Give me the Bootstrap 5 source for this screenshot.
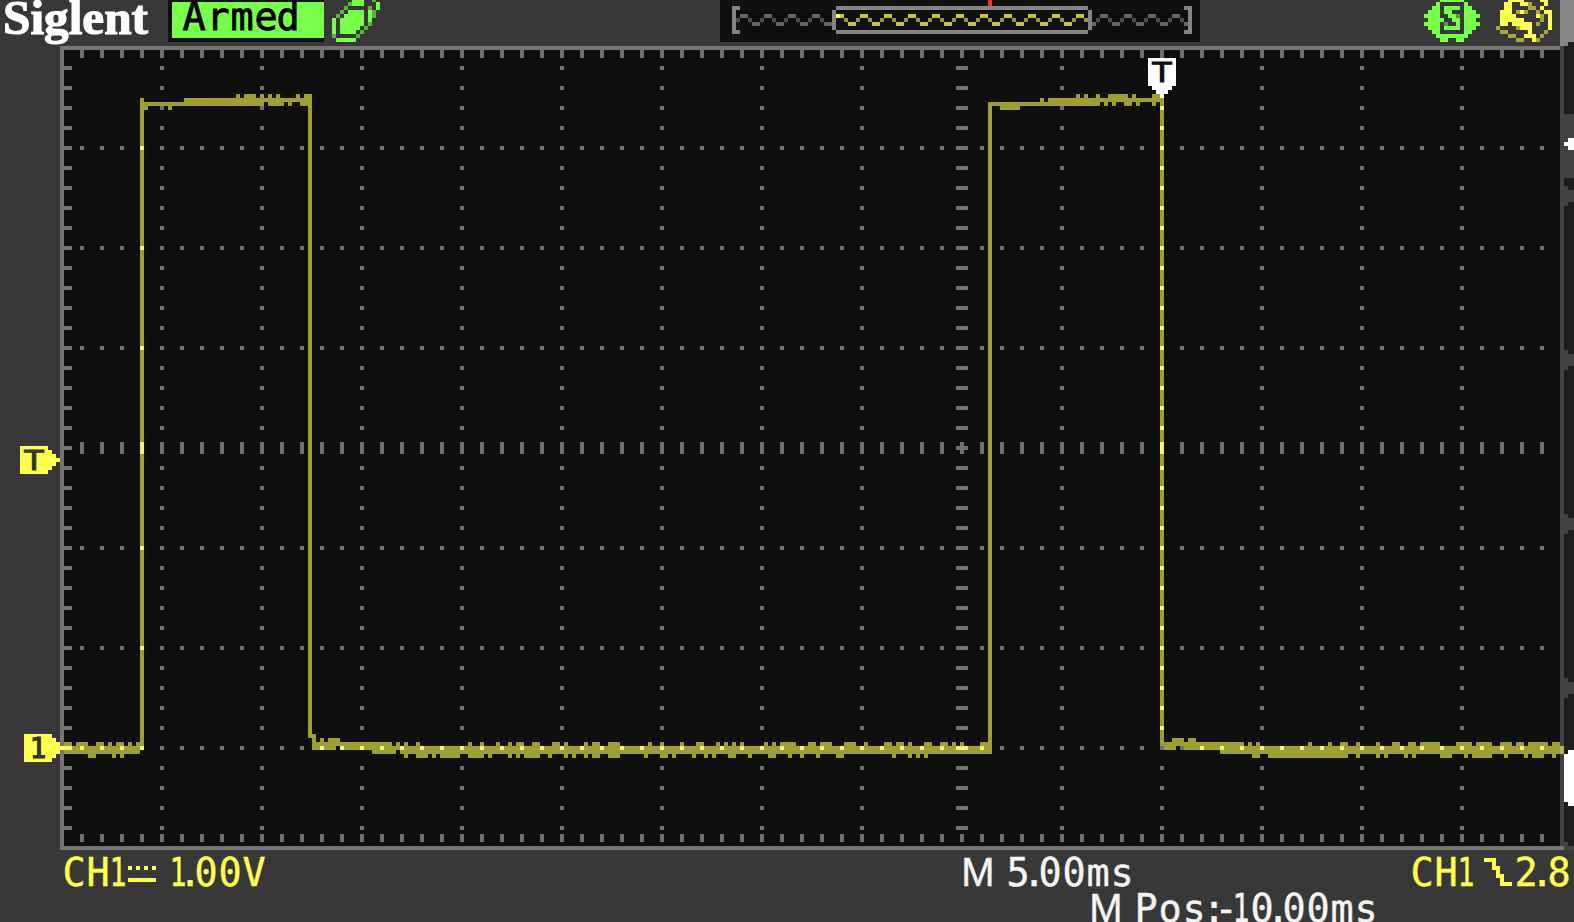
<!DOCTYPE html>
<html lang="en">
<head>
<meta charset="utf-8">
<title>Siglent oscilloscope</title>
<link href="https://cdn.jsdelivr.net/npm/bootstrap@5.3.0/dist/css/bootstrap.min.css" rel="stylesheet">
<style>
  body { background: #383838; width: 1574px; height: 922px; }
  svg { display: block; flex: none; overflow: visible; }
  .topbar { height: 46px; }
  .screen { height: 804px; }
  .readouts { height: 72px; }
  .px { shape-rendering: crispEdges; }
  .led { font-family: "DejaVu Sans Mono", monospace; font-size: 38.5px; text-anchor: middle; }
  .wide { font-family: "Liberation Sans", sans-serif; font-size: 40px; }
  .brand { font-family: "Liberation Serif", serif; font-weight: 700; font-size: 49px; fill: #fff; stroke: #fff; stroke-width: 1.2px; }
  .flag { font-family: "Liberation Sans", sans-serif; font-size: 29px; text-anchor: middle; }
  .yl { fill: #ffff50; }
  .wh { fill: #f4f4f4; }
  text.yl { stroke: #ffff50; stroke-width: .4px; }
  text.wh { stroke: #f4f4f4; stroke-width: .4px; }
  .gap-leaf { margin-left: 8px; }
  .gap-preview { margin-left: 340px; }
  .gap-usb { margin-left: 224px; }
  .gap-disk { margin-left: 16px; }
  .gap-edge { margin-left: 8px; }
</style>
</head>
<body class="m-0 overflow-hidden d-flex flex-column">

<header class="topbar d-flex align-items-start">
  <svg width="168" height="46" viewBox="0 0 168 46"><text class="brand" x="3" y="34" textLength="145" lengthAdjust="spacingAndGlyphs">Siglent</text></svg>
  <svg width="156" height="46" viewBox="168 0 156 46">
    <g class="px"><rect x="168" y="0" width="156" height="42" fill="#0f0f0f"/><rect x="172" y="2" width="152" height="36" fill="#78ff4c"/></g>
    <text class="led" x="194 218 242 266 288" y="30" fill="#000" stroke="#000" stroke-width=".8">Armed</text>
  </svg>
  <svg id="leaf" class="px gap-leaf" width="48" height="46" viewBox="0 0 48 46"></svg>
  <!-- record overview -->
  <svg id="preview" class="px gap-preview" width="480" height="46" viewBox="720 0 480 46"></svg>
  <svg id="usb" class="px gap-usb" width="56" height="46" viewBox="0 0 56 46"></svg>
  <svg id="disk" class="px gap-disk" width="56" height="46" viewBox="0 0 56 46"></svg>
  <svg class="px gap-edge" width="14" height="46" viewBox="1560 0 14 46"><path fill="#858585" d="M1560 0h14v42h-6v4h-8z"/></svg>
</header>

<main class="screen d-flex">
  <svg width="60" height="804" viewBox="0 46 60 804" class="position-relative z-1">
    <path class="px yl" d="M20 446h28v4h4v4h4v4h4v4h-4v4h-4v4h-4v4h-28z"/>
    <text class="flag" x="34" y="470" textLength="21" lengthAdjust="spacingAndGlyphs" fill="#333" stroke="#333" stroke-width="1">T</text>
    <path class="px yl" d="M24 734h28v4h4v4h4v4h4v4h-4v4h-4v4h-4v4h-28z"/>
    <text x="38" y="758" text-anchor="middle" font-family="DejaVu Sans Mono" font-size="27.5" fill="#333" stroke="#333" stroke-width="1.2">1</text>
  </svg>
  <svg id="plot" width="1514" height="804" viewBox="60 46 1514 804"></svg>
</main>

<footer class="readouts d-flex flex-column">
  <div class="d-flex">
    <svg width="900" height="40" viewBox="0 850 900 40">
      <text class="led yl" y="886"><tspan x="74 98">CH</tspan><tspan x="118" textLength="17" lengthAdjust="spacingAndGlyphs">1</tspan></text>
      <path class="px yl" d="M128 866h4v4h-4zM136 866h4v4h-4zM144 866h4v4h-4zM152 866h4v4h-4zM128 878h28v4h-28z"/>
      <text class="led yl" y="886"><tspan x="178" textLength="17" lengthAdjust="spacingAndGlyphs">1</tspan><tspan x="190 206 230 254">.00V</tspan></text>
    </svg>
    <svg width="300" height="40" viewBox="900 850 300 40">
      <text class="led wh" y="886"><tspan class="wide" x="978">M</tspan><tspan x="1018 1034 1050 1074 1098 1122">5.00ms</tspan></text>
    </svg>
    <svg width="374" height="40" viewBox="1200 850 374 40">
      <text class="led yl" y="886"><tspan x="1422 1446">CH</tspan><tspan x="1466" textLength="17" lengthAdjust="spacingAndGlyphs">1</tspan></text>
      <path class="px yl" d="M1484 858h12v8h4v8h4v8h8v4h-12v-8h-4v-8h-4v-8h-8z"/>
      <text class="led yl" x="1526 1542 1559" y="886">2.8</text>
    </svg>
  </div>
  <svg width="1574" height="32" viewBox="0 890 1574 32">
    <text class="led wh" y="922"><tspan class="wide" x="1106">M</tspan><tspan x="1146 1170 1194 1214 1226">Pos:-</tspan><tspan x="1241" textLength="17" lengthAdjust="spacingAndGlyphs">1</tspan><tspan x="1262 1278 1294 1318 1342 1366">0.00ms</tspan></text>
  </svg>
</footer>

<script src="https://cdn.jsdelivr.net/npm/bootstrap@5.3.0/dist/js/bootstrap.bundle.min.js"></script>
<script>
const C = 4; // one display cell
const rect = (x, y, w, h) => `M${x} ${y}h${w}v${h}h${-w}z`;
const path = (d, fill) => `<path class="px" fill="${fill}" d="${d}"/>`;

// icon bitmaps: X bright, o dim
function icon(id, rows, bright, dim) {
  let a = '', b = '';
  rows.forEach((r, j) => [...r].forEach((c, i) => {
    const y = Math.max(0, j * C - 2), h = j ? C : 2;
    if (c === 'X') a += rect(i * C, y, C, h);
    if (c === 'o') b += rect(i * C, y, C, h);
  }));
  document.getElementById(id).innerHTML = path(a, bright) + path(b, dim);
}
icon('leaf', [
  '.....XXX..o.',
  '....oXXX...X',
  '...o.....o.X',
  '..o.XXXX.Xo.',
  '.o.XXXXX.Xo.',
  'X.XXXXXX.X..',
  'X.XXXXXX.o..',
  'X.XXXXX.o...',
  'X.XXXX.o....',
  'o.....o.....',
  '.XXXXX......'], '#78ff4c', '#57b53c');
icon('usb', [
  '....XXXXXX....',
  '...X......X...',
  '..XX.XXXX.XX..',
  '.XXX.XX...XXX.',
  'XXXX..XXo.XXXX',
  '.XXXX..XX.XXX.',
  'XXXX.o..X.XXXX',
  '.XXX.XXXX.XXX.',
  '..XX......XX..',
  '...XXXXXXXX...',
  '....XX..XX....'], '#78ff4c', '#4f9a39');
icon('disk', [
  '...XXXX....XX.',
  '..XX..XXo...X.',
  '..XX....oo.X..',
  '.XXX.oXo..o.XX',
  '.XXXX.....Xo.X',
  '.XXXXXX....o.X',
  '.XX.XXXXX.o..X',
  'o....oXXX....X',
  '.oo.....X...o.',
  '...oo..XXX.o..',
  '.....oo..Xo...'], '#ffff50', '#aaa53c');

// overview strip
(() => {
  let hiG = '', loG = '', hiY = '', loY = '';
  for (let x = 736; x < 1188; x += C) {
    if (x === 832 || x === 1088) continue;
    const p = ((x - 740) / C + 6) % 6, y = [14, 14, 18, 22, 22, 18][p];
    const mid = y === 18, r = rect(x, y, C, C);
    if (x > 832 && x < 1088) mid ? loY += r : hiY += r;
    else mid ? loG += r : hiG += r;
  }
  document.getElementById('preview').innerHTML =
    path(rect(720, 0, 480, 42), '#0f0f0f') +
    path(loG, '#505050') + path(hiG, '#656565') + path(loY, '#999635') + path(hiY, '#c8c43c') +
    path(rect(836, 14, 4, 4), '#ffff50') +
    path('M732 6h8v4h-4v20h4v4h-8zM1184 6h8v28h-8v-4h4v-20h-4z' +
      rect(832, 10, 4, 20) + rect(1088, 10, 4, 20) + rect(836, 6, 252, 4) + rect(836, 30, 252, 4), '#858585') +
    path(rect(988, 0, 4, 6), '#f03020');
})();

// trace: row y -> [from, to, from, to, ...]
const trace = {
  94: [236,240,244,256,260,264,268,272,276,280,296,300,304,312,
       1076,1080,1084,1088,1096,1100,1108,1128,1132,1136,1152,1164],
  98: [140,144,184,312,1040,1044,1048,1164],
  102: [140,264,268,284,288,292,300,312,988,1100,1104,1108,1112,1116,1124,1132,1136,1140,1152,1156,1160,1164],
  106: [140,148,168,172,1000,1020],
  734: [308,316],
  738: [312,316,320,324,328,340,1172,1184,1188,1196],
  742: [64,72,76,88,96,104,108,112,116,124,128,132,136,144,312,392,396,400,404,408,416,420,468,472,480,484,
        496,500,508,512,516,524,532,540,552,560,564,568,584,588,592,600,608,620,648,652,660,664,680,684,696,704,
        716,720,724,728,732,736,740,744,764,768,772,776,780,796,808,816,820,832,844,856,864,868,884,892,896,904,
        908,912,924,932,940,948,952,956,960,964,980,992,1160,1244,1248,1252,1256,1260,1308,1312,1328,1332,
        1340,1348,1356,1360,1376,1380,1392,1400,1408,1416,1420,1440,1456,1472,1476,1492,1500,1512,1516,1524,1528,1548,1552,1560],
  746: [64,144,312,336,340,992,1164,1176,1184,1564],
  750: [64,140,372,396,400,992,1220,1564],
  754: [88,96,112,116,120,124,404,408,416,428,432,436,440,460,468,484,488,492,508,512,516,520,524,540,548,552,
        564,568,572,576,584,588,592,600,608,620,644,648,660,668,672,676,692,696,704,708,712,716,728,736,748,752,
        768,776,788,792,800,804,816,820,836,844,892,896,908,912,916,920,924,928,1252,1260,1268,1348,1356,1360,
        1376,1380,1384,1388,1404,1408,1412,1416,1440,1452,1464,1468,1472,1492,1504,1508,1524,1528,1532,1544,1552,1556]
};
(() => {
  const lit = new Set(), grid = new Set();
  for (const y in trace) for (let i = 0; i < trace[y].length; i += 2)
    for (let x = trace[y][i]; x < trace[y][i + 1]; x += C) lit.add(x + ',' + y);
  [[140, 98, 750], [308, 94, 738], [988, 102, 754], [1160, 94, 746]].forEach(([x, a, b]) => {
    for (let y = a; y < b; y += C) lit.add(x + ',' + y);
  });
  const g = (x, y) => grid.add(x + ',' + y);
  for (let x = 80; x <= 1540; x += 20) {
    g(x, 50); g(x, 54); g(x, 834); g(x, 838);
    for (let y = 146; y <= 746; y += 100) g(x, y);
    g(x, 442); g(x, 450);
  }
  for (let y = 66; y <= 826; y += 20) {
    g(64, y); g(68, y);
    for (let x = 160; x <= 1460; x += 100) g(x, y);
    g(956, y); g(964, y);
  }
  let t = '', d = '', h = '';
  lit.forEach(k => { const [x, y] = k.split(',').map(Number); grid.has(k) ? h += rect(x, y, C, C) : t += rect(x, y, C, C); });
  grid.forEach(k => { if (!lit.has(k)) { const [x, y] = k.split(',').map(Number); d += rect(x, y, C, C); } });

  const edge = (a, b) => `M1568 ${a}h6V${b}h-6v-4h-4V${a + 4}h4z`;
  document.getElementById('plot').innerHTML =
    path(rect(64, 50, 1496, 796), '#0f0f0f') +
    path(rect(1560, 46, 14, 804), '#424242') +
    path('M1568 42h6v72h-10V46h4zM1564 178h10v12h-6v-4h-4z' + edge(202, 354) + edge(366, 518) + edge(530, 682) + edge(694, 846), '#1e1e1e') +
    path('M1568 138h6v12h-6v-4h-4v-4h4zM1568 750h6v56h-6v-4h-4v-48h4z', '#fff') +
    path('M60 46h1500v4H64v796h1500v4H60z', '#757575') +
    path(d, '#707070') + path(t, '#a09d33') + path(h, '#f6f478') + path(rect(1560, 746, 4, 8), '#b9b651') +
    path('M1148 58h28v28h-4v4h-4v4h-4v4h-4v-4h-4v-4h-4v-4h-4z', '#fff') +
    '<text class="flag" x="1162" y="82" textLength="21" lengthAdjust="spacingAndGlyphs" fill="#0f0f0f" stroke="#0f0f0f">T</text>';
})();
</script>
</body>
</html>
